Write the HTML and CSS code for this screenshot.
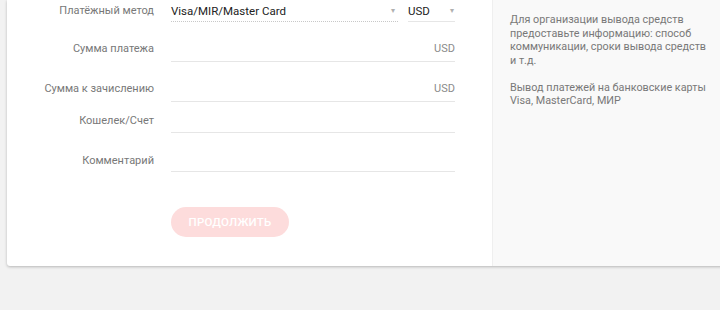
FILE: index.html
```html
<!DOCTYPE html>
<html lang="ru">
<head>
<meta charset="utf-8">
<link rel="stylesheet" href="styles.css">
</head>
<body>
<div class="card">
  <form class="form">
    <div class="row row1">
      <label class="label">Платёжный метод</label>
      <div class="field field-split">
        <div class="select select-wide"><span class="value">Visa/MIR/Master Card</span><span class="arrow">▾</span></div>
        <div class="select select-cur"><span class="value">USD</span><span class="arrow">▾</span></div>
      </div>
    </div>
    <div class="row row2">
      <label class="label">Сумма платежа</label>
      <div class="field input"><span class="suffix">USD</span></div>
    </div>
    <div class="row row3">
      <label class="label">Сумма к зачислению</label>
      <div class="field input"><span class="suffix">USD</span></div>
    </div>
    <div class="row row4">
      <label class="label">Кошелек/Счет</label>
      <div class="field input"></div>
    </div>
    <div class="row row5">
      <label class="label">Комментарий</label>
      <div class="field input"></div>
    </div>
    <div class="actions">
      <button type="button" class="btn">ПРОДОЛЖИТЬ</button>
    </div>
  </form>
  <aside class="info">
    <p>Для организации вывода средств предоставьте информацию: способ коммуникации, сроки вывода средств и т.д.</p>
    <p>Вывод платежей на банковские карты Visa, MasterCard, МИР</p>
  </aside>
</div>
</body>
</html>
```
FILE: styles.css
```css
html, body {
  margin: 0;
  padding: 0;
}
body {
  background: #f2f2f2;
  font-family: Roboto, "Liberation Sans", sans-serif;
  overflow: hidden;
  width: 720px;
  height: 310px;
}
.card {
  margin-left: 7px;
  width: 740px;
  height: 266px;
  background: #fff;
  border-radius: 0 0 3px 3px;
  box-shadow: 0 1px 3px rgba(0,0,0,0.25);
  display: flex;
}
.form {
  width: 485px;
  flex: none;
}
.row {
  display: flex;
  align-items: flex-end;
}
.label {
  width: 147px;
  text-align: right;
  font-size: 11px;
  color: #787878;
  line-height: 22px;
  height: 22px;
}
.field {
  margin-left: 17px;
  width: 284px;
  box-sizing: border-box;
  font-size: 11.5px;
  line-height: 22px;
}
.field-split {
  display: flex;
  gap: 10px;
  height: 22px;
}
.select {
  display: flex;
  justify-content: space-between;
  align-items: center;
  height: 22px;
  box-sizing: border-box;
  color: #222;
}
.select-wide {
  width: 227px;
  border-bottom: 1px dotted #c8c8c8;
  padding-right: 3px;
}
.select-cur {
  flex: 1;
  border-bottom: 1px solid #e6e6e6;
  padding-right: 1px;
}
.select .value {
  line-height: 22px;
}
.arrow {
  color: #b0b0b0;
  font-size: 8px;
  line-height: 10px;
}
.input {
  border-bottom: 1px solid #e6e6e6;
  text-align: right;
  height: 23px;
  font-size: 11px;
}
.suffix {
  color: #8a8a8a;
  display: block;
  line-height: 22px;
  height: 22px;
}
.row2 { margin-top: 16px; }
.row2 .field { padding-bottom: 1px; height: 24px; }
.row2 .label { margin-bottom: 2px; }
.row3 { margin-top: 16px; }
.row3 .field { padding-bottom: 1px; height: 24px; }
.row3 .label { margin-bottom: 2px; }
.row4 { margin-top: 8px; }
.row4 .label { margin-bottom: 1px; }
.row5 { margin-top: 17px; }
.row5 .field { height: 22px; }
.row5 .label { margin-bottom: 0; }
.actions {
  margin-top: 35px;
  padding-left: 164px;
}
.btn {
  display: block;
  width: 118px;
  height: 30px;
  border: none;
  border-radius: 15px;
  background: #fddcdc;
  color: #fff;
  font-family: Roboto, "Liberation Sans", sans-serif;
  font-weight: 500;
  font-size: 11.5px;
  letter-spacing: 0.2px;
  padding: 0;
}
.info {
  flex: 1;
  background: #f9f9f9;
  border-left: 1px solid #efefef;
  padding: 13px 0 0 17px;
  border-radius: 0 0 3px 0;
}
.info p {
  margin: 0 0 13.5px;
  width: 200px;
  font-size: 10.8px;
  line-height: 13.5px;
  color: #787878;
}
```
